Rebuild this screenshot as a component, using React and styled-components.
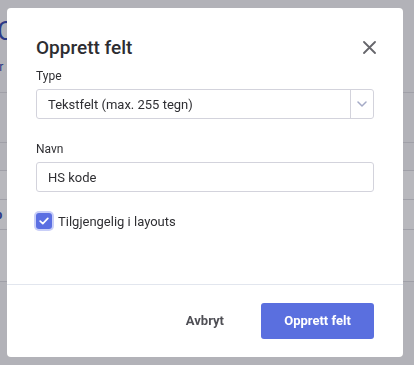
import React from "react";
import styled, { createGlobalStyle } from "styled-components";

const Global = createGlobalStyle`
  html, body { margin: 0; padding: 0; }
  body {
    width: 414px;
    height: 365px;
    overflow: hidden;
    font-family: Roboto, "Noto Sans", sans-serif;
    background: #f5f5f8;
  }
  * { box-sizing: border-box; }
`;

/* ---------- background page ---------- */
const Page = styled.div`
  width: 414px;
  height: 365px;
  background: #f5f5f8;
  display: flex;
  flex-direction: column;
`;

const PageHeading = styled.div`
  padding: 17px 0 0 0;
  height: 93px;
  border-bottom: 1px solid #dcdce2;
  display: flex;
  flex-direction: column;
  gap: 15px;
`;

const HeadingText = styled.div`
  font-size: 26px;
  line-height: 28px;
  color: #3c4fb5;
  margin-left: -3px;
`;

const SubText = styled.div`
  font-size: 12px;
  color: #3c4fb5;
  margin-left: -7px;
`;

const Row = styled.div`
  height: ${(p) => p.$h}px;
  background: ${(p) => (p.$light ? "#fdfdff" : "#f5f5f8")};
  border-bottom: 1px solid #dcdce2;
  font-size: 13px;
  font-weight: 700;
  color: #3c4fb5;
  display: flex;
  align-items: center;
  margin-left: -5px;
`;

const Overlay = styled.div`
  position: fixed;
  inset: 0;
  background: rgba(0, 0, 10, 0.27);
`;

/* ---------- modal ---------- */
const Modal = styled.div`
  position: fixed;
  left: 7px;
  top: 8px;
  width: 396px;
  height: 349px;
  background: #fff;
  border-radius: 4px;
  display: flex;
  flex-direction: column;
  color: #2f2f33;
`;

const Header = styled.div`
  display: flex;
  align-items: center;
  justify-content: space-between;
  padding: 19px 27px 0 29px;
  height: 60px;
`;

const Title = styled.h2`
  margin: 0;
  font-size: 19px;
  font-weight: 500;
  line-height: 26px;
  color: #2d2d31;
`;

const CloseButton = styled.button`
  border: 0;
  background: none;
  padding: 0;
  width: 14px;
  height: 14px;
  display: flex;
  align-items: center;
  justify-content: center;
  cursor: pointer;
`;

const Body = styled.div`
  flex: 1;
  padding: 0 29px;
  display: flex;
  flex-direction: column;
`;

const Field = styled.div`
  display: flex;
  flex-direction: column;
  margin-bottom: ${(p) => p.$mb}px;
`;

const Label = styled.label`
  font-size: 12px;
  line-height: 16px;
  color: #2f2f33;
  margin-bottom: 5px;
`;

const SelectBox = styled.div`
  height: 30px;
  border: 1px solid #d3d3dc;
  border-radius: 3px;
  display: flex;
  align-items: stretch;
`;

const SelectValue = styled.div`
  flex: 1;
  display: flex;
  align-items: center;
  padding-left: 11px;
  font-size: 13px;
  color: #2f2f33;
`;

const SelectArrow = styled.div`
  width: 23px;
  border-left: 1px solid #d3d3dc;
  display: flex;
  align-items: center;
  justify-content: center;
`;

const TextInput = styled.input`
  height: 30px;
  border: 1px solid #d3d3dc;
  border-radius: 3px;
  padding: 0 11px;
  font-family: inherit;
  font-size: 13px;
  color: #2f2f33;
  outline: none;
`;

const CheckRow = styled.label`
  display: flex;
  align-items: center;
  gap: 6px;
  font-size: 13px;
  color: #2f2f33;
`;

const CheckBox = styled.span`
  width: 16px;
  height: 16px;
  border-radius: 3px;
  background: #5b6fe2;
  box-shadow: 0 0 0 2px #c9cff8;
  display: flex;
  align-items: center;
  justify-content: center;
`;

const Footer = styled.div`
  height: 73px;
  border-top: 1px solid #e2e6ee;
  display: flex;
  align-items: center;
  justify-content: flex-end;
  padding: 0 29px 1px 0;
  gap: 17px;
`;

const Button = styled.button`
  height: 36px;
  border: 0;
  border-radius: 3px;
  font-family: inherit;
  font-size: 13px;
  font-weight: 700;
  padding: 0 ${(p) => (p.$primary ? 22 : 20)}px;
  min-width: ${(p) => (p.$primary ? 113 : 0)}px;
  background: ${(p) => (p.$primary ? "#5a6fdf" : "transparent")};
  color: ${(p) => (p.$primary ? "#fff" : "#4f4f55")};
  cursor: pointer;
`;

export default function App() {
  return (
    <>
      <Global />
      <Page>
        <PageHeading>
          <HeadingText>C</HeadingText>
          <SubText>er</SubText>
        </PageHeading>
        <Row $h={50} />
        <Row $h={28} />
        <Row $h={29} $light />
        <Row $h={30} $light>p</Row>
        <Row $h={52} $light />
      </Page>
      <Overlay />
      <Modal role="dialog">
        <Header>
          <Title>Opprett felt</Title>
          <CloseButton aria-label="Lukk">
            <svg width="13" height="13" viewBox="0 0 13 13">
              <path d="M1 1L12 12M12 1L1 12" stroke="#66666b" strokeWidth="1.8" strokeLinecap="round" />
            </svg>
          </CloseButton>
        </Header>
        <Body>
          <Field $mb={22}>
            <Label>Type</Label>
            <SelectBox>
              <SelectValue>Tekstfelt (max. 255 tegn)</SelectValue>
              <SelectArrow>
                <svg width="10" height="6" viewBox="0 0 10 6">
                  <path d="M1 1L5 5L9 1" stroke="#a4aac6" strokeWidth="1.5" fill="none" strokeLinecap="round" strokeLinejoin="round" />
                </svg>
              </SelectArrow>
            </SelectBox>
          </Field>
          <Field $mb={21}>
            <Label>Navn</Label>
            <TextInput defaultValue="HS kode" />
          </Field>
          <CheckRow>
            <CheckBox>
              <svg width="10" height="8" viewBox="0 0 10 8">
                <path d="M1.2 4.2L3.8 6.6L8.8 1.4" stroke="#fff" strokeWidth="1.7" fill="none" strokeLinecap="round" strokeLinejoin="round" />
              </svg>
            </CheckBox>
            Tilgjengelig i layouts
          </CheckRow>
        </Body>
        <Footer>
          <Button>Avbryt</Button>
          <Button $primary>Opprett felt</Button>
        </Footer>
      </Modal>
    </>
  );
}
